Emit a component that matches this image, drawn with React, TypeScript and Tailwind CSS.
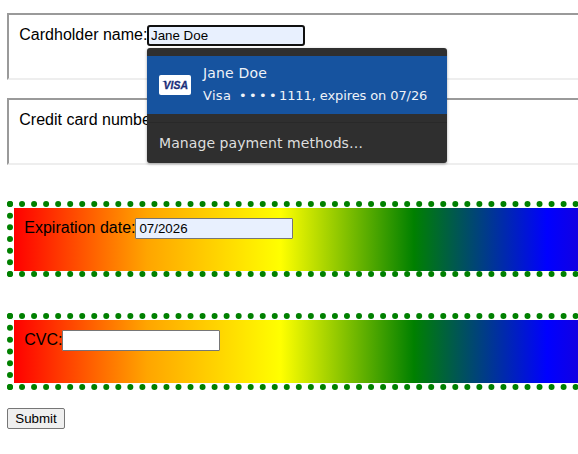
import React from 'react';

const field =
  'block h-[21px] w-[158px] shrink-0 rounded-[1px] border border-[#767676] pl-[3.4px] pr-[3px] py-0 text-[13.333px] leading-[17px] text-black outline-none';

function VisaCard() {
  return (
    <svg width="32" height="20" viewBox="0 0 32 20" className="shrink-0">
      <rect width="32" height="20" rx="2" fill="#fff" />
      <path d="M3.4 6h3.4l1.2 3.2C6.9 7.8 5.4 6.8 3.4 6.3z" fill="#1a2f7b" />
      <text
        x="4.6"
        y="14"
        fill="#1a2f7b"
        stroke="#1a2f7b"
        strokeWidth="0.3"
        fontFamily="Liberation Sans, sans-serif"
        fontSize="11"
        fontWeight="700"
        fontStyle="italic"
        textLength="24.4"
        lengthAdjust="spacingAndGlyphs"
      >
        VISA
      </text>
    </svg>
  );
}

function PaymentMenu() {
  return (
    <div className="absolute left-0 top-[23px] z-10 h-[115px] w-[300px] overflow-hidden rounded-[3px] bg-[#2f2f2f] pt-2 font-['DejaVu_Sans',sans-serif] shadow-[0_1px_3px_rgba(0,0,0,0.35)]">
      <div className="flex h-[58px] items-center gap-3 bg-[#16539f] pl-3 text-[#eef2f8]">
        <VisaCard />
        <div className="whitespace-nowrap">
          <div className="h-[23px] text-[14px] leading-[22px] tracking-[0.18px]">Jane Doe</div>
          <div className="flex h-[23px] text-[13px] leading-[22px]">
            <span className="w-[36px] tracking-[0.3px]">Visa</span>
            <span className="flex w-[40px]">
              <span className="w-[10px]">•</span>
              <span className="w-[10px]">•</span>
              <span className="w-[10px]">•</span>
              <span className="w-[10px]">•</span>
            </span>
            <span className="tracking-[-0.1px]">1111, expires on 07/26</span>
          </div>
        </div>
      </div>
      <div className="mt-2 border-t border-[#292929] pl-3 pt-[9px] text-[14px] leading-[22px] tracking-[0.08px] text-[#dedede]">
        Manage payment methods…
      </div>
    </div>
  );
}

function PlainFrame({ children }: { children: React.ReactNode }) {
  return (
    <div className="flex h-[67px] w-[804px] items-start border-2 border-b-[#eeeeee] border-l-[#9a9a9a] border-r-[#eeeeee] border-t-[#9a9a9a] pl-[10px] pt-[10px]">
      {children}
    </div>
  );
}

function RainbowFrame({ className, children }: { className: string; children: React.ReactNode }) {
  return (
    <div className={`w-[813px] border-[6px] border-dotted border-[#008000] pl-px pt-px ${className}`}>
      <div className="flex h-[63px] w-[800px] items-start bg-[linear-gradient(to_right,red,orange,yellow,green,blue,indigo,violet)] pl-[10px] pt-[10px]">
        {children}
      </div>
    </div>
  );
}

export default function App() {
  return (
    <div className="h-[454px] w-[578px] overflow-hidden bg-white pl-[7px] pt-[13px] font-['Liberation_Sans',Arial,sans-serif] text-[16px] leading-[20px] text-black">
      <PlainFrame>
        <label className="w-[128px] whitespace-nowrap pl-[0.3px]">Cardholder name:</label>
        <div className="relative">
          <input
            className="block h-[21px] w-[158px] rounded-[3px] border-2 border-[#101010] bg-[#e8f0fe] px-[2px] py-0 text-[13.333px] leading-[17px] text-black outline-none"
            defaultValue="Jane Doe"
          />
          <PaymentMenu />
        </div>
      </PlainFrame>
      <div className="mt-[18px]">
        <PlainFrame>
          <label className="whitespace-nowrap pl-[0.3px]">Credit card number:</label>
        </PlainFrame>
      </div>
      <RainbowFrame className="mt-9 h-[76px]">
        <label className="w-[111px] whitespace-nowrap pl-[0.3px]">Expiration date:</label>
        <input className={`${field} bg-[#e8f0fe]`} defaultValue="07/2026" />
      </RainbowFrame>
      <RainbowFrame className="mt-9 h-[77px]">
        <label className="w-[38px] whitespace-nowrap pl-[0.3px]">CVC:</label>
        <input className={`${field} bg-white`} />
      </RainbowFrame>
      <button className="mt-[18px] block h-[21px] w-[58px] rounded-[2px] border border-[#767676] bg-[#efefef] text-center text-[13.333px] leading-[19px]">
        Submit
      </button>
    </div>
  );
}
